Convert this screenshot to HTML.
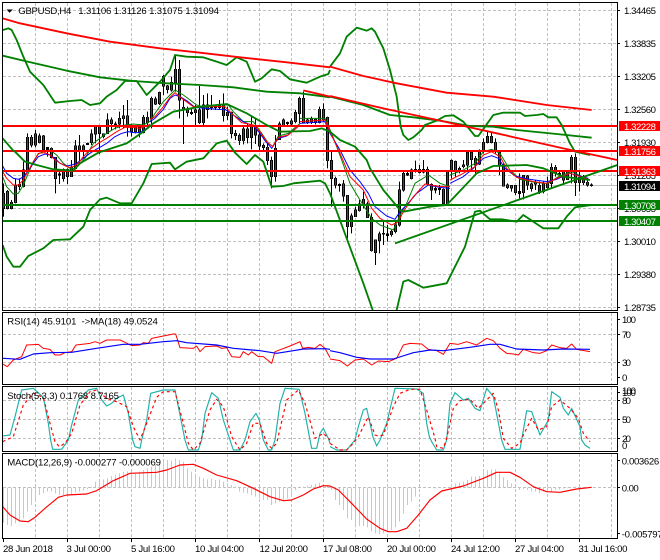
<!DOCTYPE html>
<html><head><meta charset="utf-8"><title>GBPUSD,H4</title>
<style>
html,body{margin:0;padding:0;background:#fff}
svg{display:block}
text{font-family:"Liberation Sans",sans-serif;font-size:9.6px;fill:#000}
.w{fill:#fff}
.c{shape-rendering:crispEdges;fill:none}
.l{fill:none;stroke-linejoin:round}
</style></head><body>
<svg width="660" height="560" viewBox="0 0 660 560" xmlns="http://www.w3.org/2000/svg">
<defs>
<clipPath id="m"><rect x="3" y="3" width="614" height="307"/></clipPath>
<clipPath id="rs"><rect x="3" y="313" width="614" height="71"/></clipPath>
<clipPath id="st"><rect x="3" y="387" width="614" height="64"/></clipPath>
<clipPath id="ma"><rect x="3" y="454" width="614" height="84"/></clipPath>
</defs>
<rect width="660" height="560" fill="#fff"/>

<!-- grid -->
<g stroke="#c0c0c0" stroke-width="1" stroke-dasharray="3 2" fill="none" shape-rendering="crispEdges">
<path d="M3 10.5H617M3 43.5H617M3 76.5H617M3 109.5H617M3 142.5H617M3 175.5H617M3 208.5H617M3 241.5H617M3 274.5H617M3 307.5H617"/>
<path d="M3 334.5H617M3 362.5H617"/>
<path d="M3 400.5H617M3 419.5H617M3 438.5H617"/>
<path d="M3 487.5H617"/>
<path d="M35.5 3V310M67.5 3V310M99.5 3V310M131.5 3V310M163.5 3V310M195.5 3V310M227.5 3V310M259.5 3V310M291.5 3V310M323.5 3V310M355.5 3V310M387.5 3V310M419.5 3V310M451.5 3V310M483.5 3V310M515.5 3V310M547.5 3V310M579.5 3V310M611.5 3V310"/>
<path d="M35.5 313V384M67.5 313V384M99.5 313V384M131.5 313V384M163.5 313V384M195.5 313V384M227.5 313V384M259.5 313V384M291.5 313V384M323.5 313V384M355.5 313V384M387.5 313V384M419.5 313V384M451.5 313V384M483.5 313V384M515.5 313V384M547.5 313V384M579.5 313V384M611.5 313V384"/>
<path d="M35.5 387V451M67.5 387V451M99.5 387V451M131.5 387V451M163.5 387V451M195.5 387V451M227.5 387V451M259.5 387V451M291.5 387V451M323.5 387V451M355.5 387V451M387.5 387V451M419.5 387V451M451.5 387V451M483.5 387V451M515.5 387V451M547.5 387V451M579.5 387V451M611.5 387V451"/>
<path d="M35.5 454V538M67.5 454V538M99.5 454V538M131.5 454V538M163.5 454V538M195.5 454V538M227.5 454V538M259.5 454V538M291.5 454V538M323.5 454V538M355.5 454V538M387.5 454V538M419.5 454V538M451.5 454V538M483.5 454V538M515.5 454V538M547.5 454V538M579.5 454V538M611.5 454V538"/>
</g>
<path d="M3 185.5H617" stroke="#c0c0c0" stroke-width="1" shape-rendering="crispEdges"/>

<!-- candles -->
<g clip-path="url(#m)">
<g class="c" transform="translate(0,50) scale(1,.33333)">
<path stroke="#000" d="M3.5 400V500M7.5 420V478M11.5 450V478M15.5 385V460M19.5 385V420M23.5 335V412M27.5 250V365M31.5 255V292M35.5 240V292M39.5 250V280M43.5 255V302M47.5 292V320M51.5 292V325M55.5 322V430M59.5 365V402M63.5 355V395M67.5 355V402M71.5 330V378M75.5 270V358M79.5 255V340M83.5 283V325M87.5 278V285M91.5 238V285M95.5 225V280M99.5 228V312M103.5 250V265M107.5 190V252M111.5 202V240M115.5 215V238M119.5 185V235M123.5 165V235M127.5 150V260M131.5 222V260M135.5 225V250M139.5 225V262M143.5 195V250M147.5 185V230M151.5 140V235M155.5 140V165M159.5 125V165M163.5 75V135M167.5 105V130M171.5 80V125M175.5 15V125M179.5 30V205M183.5 145V282M187.5 170V200M191.5 175V195M195.5 165V228M199.5 108V222M203.5 135V225M207.5 130V205M211.5 135V180M215.5 165V180M219.5 150V180M223.5 130V215M227.5 170V210M231.5 185V265M235.5 240V270M239.5 250V285M243.5 225V283M247.5 220V280M251.5 198V298M255.5 205V282M259.5 240V300M263.5 280V300M267.5 280V345M271.5 320V415M275.5 255V395M279.5 215V270M283.5 205V228M287.5 215V228M291.5 205V225M295.5 180V220M299.5 140V220"/>
<g id="g1"><path id="gb1" stroke-linecap="square" stroke-width="3" stroke="#000" d="M3.5 430V475M11.5 457V475M15.5 405V458M23.5 360V410M27.5 262V360M35.5 252V285M39.5 258V278M47.5 293V298M59.5 372V375M63.5 358V385M71.5 352V380M75.5 288V355M83.5 288V305M87.5 280V283M91.5 252V278M95.5 228V252M103.5 252V260M107.5 210V250M115.5 222V224M119.5 205V222M131.5 228V245M139.5 232V247M143.5 202V247M151.5 145V205M159.5 128V160M171.5 97V120M175.5 58V98M187.5 178V188M191.5 187V190M195.5 180V188M203.5 165V218M207.5 165V178M211.5 168V172M215.5 170V172M219.5 165V172M227.5 187V197M243.5 237V272M251.5 227V262M275.5 295V380M279.5 222V268M283.5 210V225M287.5 217V220M291.5 213V222M295.5 188V215M299.5 145V190"/>
<path stroke="#0a700a" d="M3.5 430V475M11.5 457V475M15.5 405V458M23.5 360V410M27.5 262V360M35.5 252V285M39.5 258V278M63.5 358V385M71.5 352V380M75.5 288V355M83.5 288V305M91.5 252V278M95.5 228V252M103.5 252V260M107.5 210V250M119.5 205V222M131.5 228V245M139.5 232V247M143.5 202V247M151.5 145V205M159.5 128V160M171.5 97V120M175.5 58V98M187.5 178V188M195.5 180V188M203.5 165V218M207.5 165V178M227.5 187V197M243.5 237V272M251.5 227V262M275.5 295V380M279.5 222V268M283.5 210V225M291.5 213V222M295.5 188V215M299.5 145V190"/></g>
<path stroke-linecap="square" stroke-width="3" stroke="#000" d="M7.5 425V475M19.5 403V410M31.5 262V285M43.5 258V298M51.5 295V322M55.5 322V385M67.5 358V380M79.5 288V305M99.5 230V250M111.5 210V220M123.5 198V205M127.5 198V230M135.5 232V245M147.5 202V217M155.5 147V162M163.5 80V108M167.5 108V118M179.5 58V150M183.5 172V180M199.5 180V218M223.5 165V197M231.5 187V250M235.5 250V256M239.5 256V272M247.5 237V262M255.5 227V255M259.5 255V288M263.5 287V292M267.5 292V332M271.5 332V380"/>
<path stroke="#f00" d="M7.5 425V475M19.5 403V410M31.5 262V285M43.5 258V298M51.5 295V322M55.5 322V385M67.5 358V380M79.5 288V305M99.5 230V250M111.5 210V220M123.5 198V205M127.5 198V230M135.5 232V245M147.5 202V217M155.5 147V162M163.5 80V108M167.5 108V118M179.5 58V150M183.5 172V180M199.5 180V218M223.5 165V197M231.5 187V250M235.5 250V256M239.5 256V272M247.5 237V262M255.5 227V255M259.5 255V288M263.5 287V292M267.5 292V332M271.5 332V380"/>
</g>
<g class="c" transform="translate(0,90) scale(1,.33333)">
<path stroke="#000" d="M303.5 5V100M307.5 85V102M311.5 80V102M315.5 85V103M319.5 50V100M323.5 40V95M327.5 80V235M331.5 180V350M335.5 260V295M339.5 280V305M343.5 270V335M347.5 315V445M351.5 370V430M355.5 350V380M359.5 330V365M363.5 305V355M367.5 335V380M371.5 370V485M375.5 450V525M379.5 425V490M383.5 395V465M387.5 405V455M391.5 420V440M395.5 395V430M399.5 275V410M403.5 240V305M407.5 245V258M411.5 235V268M415.5 212V248M419.5 225V250M423.5 210V250M427.5 230V285M431.5 280V330M435.5 285V310M439.5 285V315M443.5 295V345M447.5 240V345"/>
<path stroke-linecap="square" stroke-width="3" stroke="#000" d="M307.5 90V97M311.5 87V95M319.5 58V97M331.5 212V265M339.5 284V286M351.5 378V410M355.5 360V380M359.5 342V362M375.5 450V487M379.5 432V452M383.5 430V432M387.5 432V436M391.5 424V434M395.5 405V425M399.5 300V405M403.5 250V300M407.5 250V255M411.5 240V265M415.5 238V243M423.5 238V246M435.5 295V300M439.5 295V298M447.5 245V342"/>
<path stroke="#0a700a" d="M307.5 90V97M311.5 87V95M319.5 58V97M331.5 212V265M351.5 378V410M355.5 360V380M359.5 342V362M375.5 450V487M379.5 432V452M391.5 424V434M395.5 405V425M399.5 300V405M403.5 250V300M411.5 240V265M447.5 245V342"/>
<path stroke-linecap="square" stroke-width="3" stroke="#000" d="M303.5 25V98M315.5 88V98M323.5 58V90M327.5 82V212M335.5 265V285M343.5 282V318M347.5 317V410M363.5 328V345M367.5 342V382M371.5 382V482M419.5 238V248M427.5 238V282M431.5 284V300M443.5 298V340"/>
<path stroke="#f00" d="M303.5 25V98M315.5 88V98M323.5 58V90M327.5 82V212M335.5 265V285M343.5 282V318M347.5 317V410M363.5 328V345M367.5 342V382M371.5 382V482M419.5 238V248M427.5 238V282M431.5 284V300M443.5 298V340"/>
</g>
<g class="c" transform="translate(0,120) scale(1,.33333)">
<path stroke="#000" d="M451.5 118V175M455.5 122V170M459.5 140V160M463.5 120V145M467.5 95V155M471.5 95V150M475.5 108V160M479.5 88V135M483.5 55V100M487.5 35V70M491.5 35V70M495.5 55V100M499.5 95V165M503.5 130V200M507.5 190V207M511.5 195V215M515.5 195V225M519.5 160V235M523.5 165V238M527.5 165V210M531.5 188V215M535.5 180V210M539.5 185V222M543.5 185V220M547.5 170V205M551.5 130V205M555.5 135V170M559.5 155V170M563.5 150V195M567.5 150V180M571.5 105V190M575.5 100V228M579.5 150V215M583.5 165V195M587.5 180V200M591.5 190V200"/>
<path stroke-linecap="square" stroke-width="3" stroke="#000" d="M451.5 122V155M463.5 135V140M467.5 98V135M475.5 115V135M479.5 95V132M483.5 67V95M487.5 50V67M511.5 197V204M519.5 215V220M523.5 167V218M535.5 187V192M539.5 197V215M543.5 190V215M551.5 142V190M559.5 160V165M563.5 155V180M567.5 155V178M571.5 112V155M579.5 172V188M591.5 195V197"/>
<path stroke="#0a700a" d="M451.5 122V155M463.5 135V140M467.5 98V135M475.5 115V135M479.5 95V132M483.5 67V95M487.5 50V67M511.5 197V204M523.5 167V218M535.5 187V192M539.5 197V215M543.5 190V215M551.5 142V190M563.5 155V180M567.5 155V178M571.5 112V155M579.5 172V188"/>
<path stroke-linecap="square" stroke-width="3" stroke="#000" d="M455.5 125V155M459.5 145V152M471.5 98V118M491.5 50V67M495.5 67V95M499.5 98V135M503.5 135V198M507.5 195V203M515.5 197V217M527.5 168V195M531.5 192V205M547.5 190V203M555.5 142V158M575.5 112V188M583.5 172V188M587.5 187V195"/>
<path stroke="#f00" d="M455.5 125V155M459.5 145V152M471.5 98V118M491.5 50V67M495.5 67V95M499.5 98V135M503.5 135V198M507.5 195V203M515.5 197V217M527.5 168V195M531.5 192V205M547.5 190V203M555.5 142V158M575.5 112V188M583.5 172V188M587.5 187V195"/>
</g>

<!-- thin MAs -->
<g class="l" stroke-width="3" transform="translate(0,50) scale(.33333)">
<polyline stroke="#008000" points="8,380 20,410 40,432 55,430 70,405 85,370 100,335 115,312 135,302 150,300 170,315 190,340 210,355 225,355 240,340 255,325 280,280 300,265 320,250 345,235 375,225 400,222 430,225 450,214"/>
<polyline stroke="#00f" points="8,348 20,370 40,385 58,388 70,380 85,362 100,340 115,320 135,312 150,315 165,325 180,340 200,348 215,345 230,340 250,325 270,310 285,300 300,292 320,280 345,260 365,250 385,245 400,248 420,248 450,228"/>
<polyline stroke="#f00" points="8,365 20,385 40,405 55,405 70,390 85,362 100,335 115,310 135,308 150,315 165,330 185,342 205,352 220,350 235,340 250,320 270,298 295,280 320,265 350,245 375,232 400,232 420,235 450,223"/>
</g>
<g class="l" stroke-width="3" transform="translate(150,50) scale(.33333)">
<polyline stroke="#008000" points="0,215 15,190 40,155 60,135 75,120 100,135 140,165 165,172 205,165 235,165 250,185 280,215 310,215 335,250 355,280 368,290 385,258 415,250 450,220"/>
<polyline stroke="#00f" points="0,215 15,205 40,178 60,145 75,135 90,140 110,152 135,172 170,175 205,178 225,178 250,195 280,215 310,228 330,250 345,272 365,295 385,265 410,258 450,225"/>
<polyline stroke="#f00" points="0,208 15,200 40,170 60,142 75,128 95,145 130,170 170,170 205,170 225,170 245,190 275,218 310,225 330,245 350,275 368,290 385,262 415,255 450,225"/>
</g>
<g class="l" stroke-width="3" transform="translate(300,90) scale(.33333)">
<polyline stroke="#008000" points="0,85 75,85 95,130 125,210 150,280 180,330 215,385 240,405 280,420 298,380 320,340 345,280 385,255 420,280 450,290"/>
<polyline stroke="#00f" points="0,100 75,95 90,130 120,180 150,240 180,275 205,310 225,350 260,378 285,388 300,365 320,345 350,310 385,285 420,292 450,295"/>
<polyline stroke="#f00" points="0,95 75,90 90,125 120,190 150,260 190,300 215,355 240,385 275,405 295,395 310,365 340,320 375,282 420,290 450,290"/>
</g>
<g class="l" stroke-width="3" transform="translate(450,120) scale(.33333)">
<polyline stroke="#008000" points="0,165 40,150 75,130 100,95 125,88 150,100 180,150 210,178 260,188 295,190 325,170 365,155 415,178"/>
<polyline stroke="#00f" points="0,190 40,170 70,145 100,115 125,107 145,115 165,145 195,168 240,178 290,185 320,178 360,160 415,175"/>
<polyline stroke="#f00" points="0,180 40,160 75,140 100,105 125,95 150,110 170,145 200,172 250,185 290,190 320,175 360,160 415,178"/>
</g>

<!-- horizontals -->
<g stroke-width="2" shape-rendering="crispEdges">
<path stroke="#f00" d="M3 126H617M3 151H617M3 171H617"/>
<path stroke="#008000" d="M3 205H617M3 221H617"/>
</g>

<!-- Bollinger / SMA / trend -->
<g class="l" stroke-width="5.5" transform="scale(.33333)">
<polyline stroke="#008000" points="8,90 25,85 35,90 50,120 70,170 90,215 130,255 165,308 210,303 245,300 270,315 300,310 320,290 350,270 375,243 410,243 440,285 480,245 510,210 525,165 560,170 610,172 650,185 680,195 710,172 740,185 765,245 785,235 815,208 840,213 870,238 920,248 960,230 985,222 990,210"/>
<polyline stroke="#008000" points="8,415 40,452 45,455 75,485 110,495 160,508 220,512 240,490 295,458 380,430 430,395 460,370 520,335 600,320 680,312 740,340 800,375 840,395 930,393 965,385 990,395"/>
<polyline stroke="#008000" points="8,735 20,770 40,800 60,800 85,768 130,745 160,720 210,718 250,680 270,630 300,598 320,593 360,610 395,610 430,550 455,492 510,488 525,508 560,485 610,475 650,430 680,422 705,458 740,492 765,465 790,485 815,560 850,558 880,550 960,542 975,550 990,580"/>
<polyline stroke="#008000" points="8,167 70,182 200,212 300,232 400,243 500,250 600,255 700,262 800,275 900,280 990,292"/>
<polyline stroke="#f00" points="8,55 60,70 200,100 330,125 480,145 600,158 720,172 860,187 990,202"/>
<polyline stroke="#f00" points="910,271 990,290"/>
</g>
<g class="l" stroke-width="5.5" transform="translate(330,0) scale(.33333)">
<polyline stroke="#008000" points="0,200 30,160 50,110 80,83 110,92 125,85 135,95 160,145 180,210 200,290 212,380 220,405 235,420 250,412 275,390 285,375 320,362 345,348 370,346 400,365 435,408 445,408 465,380 490,345 520,338 570,338 585,348 620,345 640,342 655,352 680,352 695,375 720,430 735,455 780,465"/>
<polyline stroke="#008000" points="0,395 30,420 75,440 110,480 120,505 160,570 210,630 220,635 300,620 350,615 440,520 490,498 590,495 640,505 700,530 780,540"/>
<polyline stroke="#008000" points="0,580 15,620 50,715 100,850 128,930 135,1000 190,1000 200,930 220,845 235,840 280,863 350,850 405,740 435,635 450,632 480,658 515,658 560,665 580,645 640,685 685,685 710,650 735,622 785,615"/>
<polyline stroke="#008000" points="0,290 100,315 180,345 250,352 330,362 420,378 490,380 560,390 680,402 785,413"/>
<polyline stroke="#008000" points="195,730 862,495"/>
<polyline stroke="#f00" points="0,200 100,228 200,250 350,278 490,290 650,315 785,330"/>
<polyline stroke="#f00" points="0,288 160,325 330,362 500,400 700,445 862,480"/>
</g>
</g>

<!-- RSI -->
<g clip-path="url(#rs)">
<g class="l" stroke-width="3" transform="translate(0,310) scale(.33333)"><polyline stroke="#f00" points="8,162 22,170 40,150 65,140 80,105 115,103 130,115 150,118 165,135 180,135 195,128 215,125 228,105 270,100 285,95 300,100 320,90 360,90 375,97 395,107 420,105 430,98 445,100 455,85 490,78 520,72 527,72 540,113 580,115 590,108 600,125 615,110 650,108 665,115 680,113 695,140 720,142 730,125 745,135 755,125 775,140 790,140 815,160 825,125 870,108 900,95 908,115 925,112 945,115 960,103 975,115 990,143"/></g>
<g class="l" stroke-width="3.5" transform="translate(0,310) scale(.33333)"><polyline stroke="#00f" points="8,145 60,148 100,132 150,128 215,127 290,115 370,103 420,103 490,95 530,92 560,98 650,105 700,115 780,122 830,130 880,122 910,117 975,116 990,118"/></g>
<g class="l" stroke-width="3" transform="translate(330,310) scale(.33333)"><polyline stroke="#f00" points="0,147 30,152 52,168 75,150 100,147 125,165 145,153 175,155 200,145 220,105 240,100 275,102 295,118 320,122 340,133 360,100 385,103 410,95 440,105 470,85 490,92 510,115 530,130 550,132 565,135 580,118 610,128 630,130 650,122 665,105 690,113 710,115 725,102 740,118 780,125"/></g>
<g class="l" stroke-width="3.5" transform="translate(330,310) scale(.33333)"><polyline stroke="#00f" points="0,122 30,128 80,142 120,147 190,147 250,128 300,120 340,122 420,112 480,103 510,103 560,117 640,120 700,117 780,118"/></g>
</g>

<!-- Stoch -->
<g clip-path="url(#st)">
<g class="l" stroke-width="3.5" transform="translate(0,310) scale(.33333)"><polyline stroke="#20b2aa" points="8,378 30,375 45,320 65,240 100,235 130,262 145,340 152,390 158,418 185,418 205,390 215,345 235,270 265,240 290,235 305,270 320,288 335,280 350,265 370,255 385,310 398,390 405,410 420,415 425,390 440,330 452,250 490,240 525,240 535,290 555,390 565,420 595,420 605,390 615,310 635,248 655,265 670,330 690,390 700,420 720,420 735,390 750,335 768,310 778,330 790,390 805,420 815,420 825,390 840,280 855,235 898,238 915,310 930,390 935,415 950,415 960,370 970,355 985,385 990,400"/></g>
<g class="l" stroke-width="3.5" stroke-dasharray="9 9" transform="translate(0,310) scale(.33333)"><polyline stroke="#f00" points="8,395 40,380 70,285 100,250 130,262 150,340 165,395 178,410 195,400 215,370 240,285 270,245 290,240 320,265 350,275 380,290 400,350 420,390 440,340 470,262 490,245 525,245 550,340 565,400 580,420 600,400 630,300 650,268 670,290 695,380 720,420 740,400 760,340 780,340 800,400 815,415 830,400 860,270 895,240 915,280 945,385 970,370 990,390"/></g>
<g class="l" stroke-width="3.5" transform="translate(330,310) scale(.33333)"><polyline stroke="#20b2aa" points="0,410 20,420 50,420 75,390 85,350 100,300 110,295 120,340 130,385 135,395 140,408 150,390 170,340 195,235 260,237 280,250 290,340 298,380 305,395 320,420 340,420 350,390 360,280 375,248 400,270 415,265 435,295 450,302 470,235 490,260 515,390 525,418 570,418 575,390 590,302 605,305 630,375 655,330 665,245 690,262 700,295 715,315 725,295 750,350 755,390 765,405 780,415"/></g>
<g class="l" stroke-width="3.5" stroke-dasharray="9 9" transform="translate(330,310) scale(.33333)"><polyline stroke="#f00" points="0,400 30,420 50,420 70,400 85,380 115,320 135,375 145,378 160,375 190,290 210,250 240,238 270,238 290,300 315,385 320,410 340,415 350,385 370,295 390,272 420,268 445,295 470,270 490,250 505,300 520,385 545,415 570,400 580,375 605,325 625,360 650,350 665,290 690,270 720,295 745,325 760,370 780,395"/></g>
</g>

<!-- MACD -->
<g clip-path="url(#ma)">
<g class="c" stroke="#c8c8c8" transform="translate(0,440) scale(1,.33333)">
<path d="M3.5 143V248M7.5 143V255M11.5 143V258M15.5 143V250M19.5 143V240M23.5 143V235M27.5 143V215M31.5 143V195M35.5 143V185M39.5 143V165M43.5 143V160M47.5 143V155M51.5 143V155M55.5 143V160M59.5 143V165M63.5 143V165M67.5 143V165M71.5 143V165M75.5 143V158M79.5 143V155M83.5 143V152M87.5 143V148M91.5 143V140M95.5 143V125M99.5 143V122M103.5 143V118M107.5 143V115M111.5 143V108M115.5 143V104M119.5 143V100M123.5 143V96M127.5 143V94M131.5 143V96M135.5 143V100M139.5 143V95M143.5 143V90M147.5 143V85M151.5 143V80M155.5 143V75M159.5 143V68M163.5 143V62M167.5 143V60M171.5 143V62M175.5 143V55M179.5 143V60M183.5 143V65M187.5 143V85M191.5 143V95M195.5 143V105M199.5 143V110M203.5 143V115M207.5 143V118M211.5 143V116M215.5 143V120M219.5 143V118M223.5 143V125M227.5 143V130M231.5 143V135M235.5 143V140M239.5 143V155M243.5 143V158M247.5 143V160M251.5 143V165M255.5 143V170M259.5 143V175M263.5 143V180M267.5 143V180M271.5 143V195M275.5 143V190M279.5 143V185M283.5 143V182M287.5 143V175M291.5 143V170M295.5 143V150M299.5 143V140M303.5 143V140M307.5 143V138M311.5 143V135M315.5 143V132M319.5 143V128M323.5 143V135M327.5 143V135"/>
<path d="M331.5 143V150M335.5 143V180M339.5 143V195M343.5 143V210M347.5 143V235M351.5 143V240M355.5 143V262M359.5 143V258M363.5 143V258M367.5 143V262M371.5 143V275M375.5 143V280M379.5 143V283M383.5 143V280M387.5 143V275M391.5 143V270M395.5 143V262M399.5 143V245M403.5 143V220M407.5 143V195M411.5 143V185M415.5 143V170M435.5 143V145M443.5 143V145M447.5 143V142M451.5 143V135M455.5 143V130M459.5 143V128M463.5 143V125M467.5 143V120M471.5 143V110M475.5 143V110M479.5 143V108M483.5 143V92M487.5 143V90M491.5 143V88M495.5 143V88M499.5 143V95M503.5 143V112M507.5 143V120M511.5 143V130M519.5 143V150M523.5 143V147M527.5 143V150M531.5 143V155M535.5 143V155M539.5 143V160M543.5 143V155M547.5 143V150M551.5 143V155M555.5 143V150M559.5 143V148M563.5 143V146M567.5 143V145M575.5 143V140"/>
</g>
<g class="l" stroke-width="3.5" transform="translate(0,440) scale(.33333)"><polyline stroke="#f00" points="8,200 30,225 60,243 85,245 105,232 135,205 175,172 200,165 260,162 290,152 340,122 390,100 470,97 500,90 540,75 580,73 610,85 650,105 710,122 760,145 810,170 850,182 875,180 910,165 940,147 970,137 990,138"/></g>
<g class="l" stroke-width="3.5" transform="translate(330,440) scale(.33333)"><polyline stroke="#f00" points="0,138 25,150 60,185 110,237 150,265 175,275 200,275 230,265 265,225 300,180 335,153 400,138 460,115 500,97 540,97 570,112 610,140 650,155 690,157 740,147 785,142"/></g>
</g>

<!-- pane borders -->
<g fill="none" stroke="#000" shape-rendering="crispEdges">
<rect x="2.5" y="2.5" width="615" height="308" stroke-width="1.4"/>
<rect x="2.5" y="312.5" width="615" height="72" stroke-width="1.4"/>
<rect x="2.5" y="386.5" width="615" height="65" stroke-width="1.4"/>
<rect x="2.5" y="453.5" width="615" height="85" stroke-width="1.4"/>
<path stroke-width="1" d="M617 10.5h3M617 43.5h3M617 76.5h3M617 109.5h3M617 142.5h3M617 175.5h3M617 208.5h3M617 241.5h3M617 274.5h3M617 307.5h3M617 319.5h3M617 334.5h3M617 362.5h3M617 377.5h3M617 392.5h3M617 400.5h3M617 419.5h3M617 438.5h3M617 460.5h3M617 487.5h3M617 533.5h3"/>
<path stroke-width="1" d="M3.5 538v4M67.5 538v4M131.5 538v4M195.5 538v4M259.5 538v4M323.5 538v4M387.5 538v4M451.5 538v4M515.5 538v4M579.5 538v4"/>
</g>

<!-- header -->
<polygon points="6.5,9.5 12.8,9.5 9.6,12.8" fill="#000"/>
<text x="18.3" y="14" textLength="53" lengthAdjust="spacing">GBPUSD,H4</text>
<text x="78.3" y="14" textLength="140.7" lengthAdjust="spacing">1.31106 1.31126 1.31075 1.31094</text>
<text x="7.3" y="324.5" textLength="150.5" lengthAdjust="spacing" xml:space="preserve">RSI(14) 45.9101  -&gt;MA(18) 49.0524</text>
<text x="7.3" y="399" textLength="111.7" lengthAdjust="spacing">Stoch(5,3,3) 0.1768 8.7165</text>
<text x="7.3" y="465.7" textLength="153.7" lengthAdjust="spacing">MACD(12,26,9) -0.000277 -0.000069</text>

<!-- price axis -->
<g>
<text x="624" y="14" textLength="32">1.34465</text>
<text x="624" y="47" textLength="32">1.33835</text>
<text x="624" y="80" textLength="32">1.33205</text>
<text x="624" y="113" textLength="32">1.32560</text>
<text x="624" y="146" textLength="32">1.31930</text>
<text x="624" y="179" textLength="32">1.31285</text>
<text x="624" y="212" textLength="32">1.30655</text>
<text x="624" y="245" textLength="32">1.30010</text>
<text x="624" y="278" textLength="32">1.29380</text>
<text x="624" y="311" textLength="32">1.28735</text>
</g>
<g shape-rendering="crispEdges">
<rect x="619" y="121" width="41" height="10" fill="#f00"/>
<rect x="619" y="146" width="41" height="10" fill="#f00"/>
<rect x="619" y="166" width="41" height="10" fill="#f00"/>
<rect x="619" y="181" width="41" height="10" fill="#000"/>
<rect x="619" y="200" width="41" height="10" fill="#008000"/>
<rect x="619" y="216" width="41" height="10" fill="#008000"/>
</g>
<text class="w" x="624" y="130" textLength="32">1.32228</text>
<text class="w" x="624" y="155" textLength="32">1.31756</text>
<text class="w" x="624" y="175" textLength="32">1.31363</text>
<text class="w" x="624" y="190" textLength="32">1.31094</text>
<text class="w" x="624" y="209" textLength="32">1.30708</text>
<text class="w" x="624" y="225" textLength="32">1.30407</text>

<!-- indicator axis -->
<text x="622" y="323" textLength="14">100</text>
<text x="622" y="338" textLength="9">70</text>
<text x="622" y="366" textLength="9">30</text>
<text x="622" y="381">0</text>
<text x="622" y="396" textLength="14">100</text>
<text x="622" y="394" textLength="14">100</text>
<text x="622" y="404" textLength="9">80</text>
<text x="622" y="423" textLength="9">50</text>
<text x="622" y="442" textLength="9">20</text>
<text x="622" y="449">0</text>
<text x="621.7" y="464.5" textLength="37.5">0.003626</text>
<text x="621.7" y="491.5" textLength="17">0.00</text>
<text x="621.7" y="537.5" textLength="41">-0.005797</text>

<!-- time axis -->
<g>
<text x="3" y="552" textLength="50">28 Jun 2018</text>
<text x="66.5" y="552" textLength="44.5">3 Jul 00:00</text>
<text x="131" y="552" textLength="44">5 Jul 16:00</text>
<text x="195" y="552" textLength="49">10 Jul 04:00</text>
<text x="259.5" y="552" textLength="48.5">12 Jul 20:00</text>
<text x="323" y="552" textLength="49">17 Jul 08:00</text>
<text x="387" y="552" textLength="49">20 Jul 00:00</text>
<text x="451" y="552" textLength="49">24 Jul 12:00</text>
<text x="515" y="552" textLength="49">27 Jul 04:00</text>
<text x="578.5" y="552" textLength="49">31 Jul 16:00</text>
</g>
</svg>
</body></html>
